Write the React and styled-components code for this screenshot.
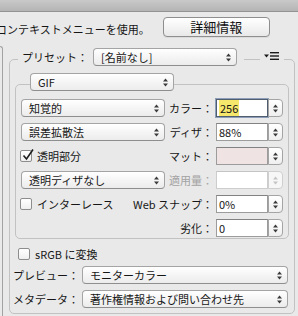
import styled, { createGlobalStyle } from "styled-components";

const Global = createGlobalStyle`
  html, body { margin: 0; padding: 0; background: #e9e9e9; }
  body {
    font-family: "Noto Sans CJK JP", "Noto Sans", sans-serif;
    font-size: 11px;
    color: #161616;
  }
  #root { width: 298px; height: 316px; overflow: hidden; }
`;

const TopStrip = styled.div`
  height: 11px;
  background: linear-gradient(#c9c9c9, #b4b4b4);
  border-bottom: 1px solid #939393;
`;

const Header = styled.div`
  display: flex;
  align-items: flex-start;
  height: 34px;
  box-sizing: border-box;
  padding-top: 5px;
`;

const Hint = styled.div`
  margin-left: -4px;
  padding-top: 2px;
  line-height: 20px;
  white-space: nowrap;
`;

const DetailButton = styled.div`
  margin-left: 13px;
  width: 107px;
  height: 20px;
  box-sizing: border-box;
  border: 1px solid #8e8e8e;
  border-radius: 4px;
  background: linear-gradient(#ffffff, #f4f4f4 50%, #e8e8e8);
  box-shadow: 0 1px 0 rgba(0, 0, 0, 0.06);
  display: flex;
  align-items: center;
  justify-content: center;
  font-size: 13px;
  line-height: 16px;
  color: #111;
`;

const Body = styled.div`
  display: flex;
  align-items: flex-start;
`;

const LeftEdge = styled.div`
  flex-shrink: 0;
  width: 3px;
  height: 270px;
  box-sizing: border-box;
  border-top: 1px solid #a2a2a2;
  border-right: 1px solid #a2a2a2;
  border-top-right-radius: 4px;
`;

const PresetBox = styled.div`
  flex-shrink: 0;
  margin: 13px 0 0 6px;
  width: 286px;
  box-sizing: border-box;
  border: 1px solid #c2c2c2;
  border-radius: 5px;
  padding: 0 5px 5px 3px;
  display: flex;
  flex-direction: column;
`;

const BoxHeader = styled.div`
  display: flex;
  align-items: center;
  height: 18px;
  margin-top: -12px;
  padding-left: ${(p) => p.$indent || 0}px;
`;

const Legend = styled.div`
  display: flex;
  align-items: center;
  gap: 5px;
  padding: 0 7px 0 4px;
  margin-left: 5px;
  background: #e9e9e9;
  line-height: 16px;
  white-space: nowrap;
`;

const Spacer = styled.div`
  flex: 1;
`;

const MenuButton = styled.div`
  display: flex;
  align-items: center;
  padding: 0 4px;
  height: 12px;
  background: #e9e9e9;
  margin-right: 5px;
`;

const PopupBox = styled.div`
  flex-shrink: 0;
  width: ${(p) => (p.$w ? `${p.$w}px` : "auto")};
  flex: ${(p) => (p.$grow ? 1 : "0 0 auto")};
  height: 18px;
  box-sizing: border-box;
  border: 1px solid #a4a4a4;
  border-bottom-color: #8e8e8e;
  border-radius: 4px;
  background: linear-gradient(#ffffff, #f5f5f5 50%, #ececec);
  display: flex;
  align-items: center;
  padding-left: 7px;
  line-height: 16px;
  white-space: nowrap;
  margin-right: ${(p) => p.$mr || 0}px;
`;

const ArrowWrap = styled.div`
  margin-left: auto;
  margin-right: 5px;
  display: flex;
`;

const Arrows = ({ color = "#3a3a3a" }) => (
  <svg width="5" height="9" viewBox="0 0 5 9">
    <path d="M0 3.6 L2.5 0.6 L5 3.6Z" fill={color} />
    <path d="M0 5.4 L2.5 8.4 L5 5.4Z" fill={color} />
  </svg>
);

const Popup = ({ children, w, grow, mr }) => (
  <PopupBox $w={w} $grow={grow} $mr={mr}>
    {children}
    <ArrowWrap>
      <Arrows />
    </ArrowWrap>
  </PopupBox>
);

const GifBox = styled.div`
  margin: 18px 0 0 2px;
  border: 1px solid #c2c2c2;
  border-radius: 5px;
  padding: 0 5px 1px 5px;
  display: flex;
  flex-direction: column;
`;

const Rows = styled.div`
  margin-top: 8px;
  display: flex;
  flex-direction: column;
  gap: 6px;
`;

const Row = styled.div`
  display: flex;
  align-items: center;
  height: 18px;
  line-height: 16px;
  white-space: nowrap;
`;

const FieldLabel = styled.div`
  flex: 1;
  display: flex;
  justify-content: flex-end;
  padding-right: 3px;
  color: ${(p) => (p.$disabled ? "#a3a3a3" : "#161616")};
`;

const NumInput = styled.div`
  width: 52px;
  height: 18px;
  box-sizing: border-box;
  border: 1px solid ${(p) => (p.$disabled ? "#cdcdcd" : "#9c9c9c")};
  border-top-color: ${(p) => (p.$disabled ? "#c4c4c4" : "#828282")};
  background: ${(p) => p.$bg || "#ffffff"};
  display: flex;
  align-items: center;
  padding-left: 2px;
  ${(p) =>
    p.$focus &&
    `
    border-color: #4f5d6f;
    box-shadow: 0 0 0 1px #8d9fb8;
  `}
`;

const Highlight = styled.span`
  background: #f5e66c;
  padding: 0 1px;
`;

const StepperBox = styled.div`
  width: 15px;
  height: 18px;
  box-sizing: border-box;
  border: 1px solid ${(p) => (p.$disabled ? "#cfcfcf" : "#a4a4a4")};
  border-radius: 0 4px 4px 0;
  background: ${(p) => (p.$disabled ? "#f7f7f7" : "linear-gradient(#ffffff, #efefef)")};
  display: flex;
  align-items: center;
  justify-content: center;
`;

const Stepper = ({ disabled }) => (
  <StepperBox $disabled={disabled}>
    <Arrows color={disabled ? "#c4c4c4" : "#3a3a3a"} />
  </StepperBox>
);

const CheckLabel = styled.div`
  display: flex;
  align-items: center;
  gap: 5px;
  margin-left: ${(p) => p.$ml || 0}px;
  white-space: nowrap;
`;

const Box = styled.div`
  position: relative;
  width: 12px;
  height: 12px;
  box-sizing: border-box;
  border: 1px solid #8d8d8d;
  border-radius: 2px;
  background: linear-gradient(#ffffff, #efefef);
`;

const Tick = styled.svg`
  position: absolute;
  left: 0;
  top: -3px;
`;

const Check = ({ checked, children, ml }) => (
  <CheckLabel $ml={ml}>
    <Box>
      {checked && (
        <Tick width="14" height="14" viewBox="0 0 14 14">
          <path d="M2.5 7.5 L5.5 11 L12 1.5" fill="none" stroke="#1e1e1e" strokeWidth="1.6" />
        </Tick>
      )}
    </Box>
    <span>{children}</span>
  </CheckLabel>
);

const SrgbRow = styled.div`
  margin-top: 8px;
  height: 14px;
  display: flex;
  align-items: center;
  line-height: 14px;
`;

const SelectRow = styled.div`
  display: flex;
  align-items: center;
  gap: 3px;
  height: 18px;
  margin-top: ${(p) => p.$mt}px;
  line-height: 16px;
  white-space: nowrap;
`;

const MenuIcon = () => (
  <svg width="16" height="10" viewBox="0 0 16 10">
    <path d="M0 2.5 L5 2.5 L2.5 5.5Z" fill="#1a1a1a" />
    <rect x="6" y="0" width="9" height="1.4" fill="#1a1a1a" />
    <rect x="6" y="3.3" width="9" height="1.4" fill="#1a1a1a" />
    <rect x="6" y="6.6" width="9" height="1.4" fill="#1a1a1a" />
  </svg>
);

const App = () => {
  return (
    <>
      <Global />
      <TopStrip />
      <Header>
        <Hint>コンテキストメニューを使用。</Hint>
        <DetailButton>詳細情報</DetailButton>
      </Header>
      <Body>
        <LeftEdge />
        <PresetBox>
          <BoxHeader>
            <Legend>
              <span>プリセット：</span>
              <Popup w={144}>[名前なし]</Popup>
            </Legend>
            <Spacer />
            <MenuButton>
              <MenuIcon />
            </MenuButton>
          </BoxHeader>

          <GifBox>
            <BoxHeader $indent={9}>
              <Popup w={144}>GIF</Popup>
            </BoxHeader>
            <Rows>
              <Row>
                <Popup w={144}>知覚的</Popup>
                <FieldLabel>カラー：</FieldLabel>
                <NumInput $focus>
                  <Highlight>256</Highlight>
                </NumInput>
                <Stepper />
              </Row>
              <Row>
                <Popup w={144}>誤差拡散法</Popup>
                <FieldLabel>ディザ：</FieldLabel>
                <NumInput>88%</NumInput>
                <Stepper />
              </Row>
              <Row>
                <Check checked ml={-1}>透明部分</Check>
                <FieldLabel>マット：</FieldLabel>
                <NumInput $bg="#efe3e3" />
                <Stepper />
              </Row>
              <Row>
                <Popup w={144}>透明ディザなし</Popup>
                <FieldLabel $disabled>適用量：</FieldLabel>
                <NumInput $disabled />
                <Stepper disabled />
              </Row>
              <Row>
                <Check ml={-1}>インターレース</Check>
                <FieldLabel>Web スナップ：</FieldLabel>
                <NumInput>0%</NumInput>
                <Stepper />
              </Row>
              <Row>
                <FieldLabel>劣化：</FieldLabel>
                <NumInput>0</NumInput>
                <Stepper />
              </Row>
            </Rows>
          </GifBox>

          <SrgbRow>
            <Check ml={5}>sRGB に変換</Check>
          </SrgbRow>
          <SelectRow $mt={5}>
            <span>プレビュー：</span>
            <Popup grow mr={1}>モニターカラー</Popup>
          </SelectRow>
          <SelectRow $mt={6}>
            <span>メタデータ：</span>
            <Popup grow mr={1}>著作権情報および問い合わせ先</Popup>
          </SelectRow>
        </PresetBox>
      </Body>
    </>
  );
};

export default App;
